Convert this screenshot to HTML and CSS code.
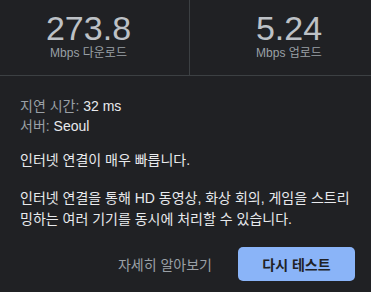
FILE: index.html
```html
<!DOCTYPE html>
<html lang="ko">
<head>
<meta charset="utf-8">
<title>인터넷 속도 테스트</title>
<link rel="stylesheet" href="styles.css">
</head>
<body>
<div class="card">
  <div class="stats">
    <div class="stat stat-down">
      <div class="value">273.8</div>
      <div class="label">Mbps 다운로드</div>
    </div>
    <div class="stat stat-up">
      <div class="value">5.24</div>
      <div class="label">Mbps 업로드</div>
    </div>
  </div>
  <div class="details">
    <div class="row"><span class="key">지연 시간:</span> <span class="val">32 ms</span></div>
    <div class="row"><span class="key">서버:</span> <span class="val">Seoul</span></div>
    <p class="heading">인터넷 연결이 매우 빠릅니다.</p>
    <p class="desc">인터넷 연결을 통해 HD 동영상, 화상 회의, 게임을 스트리밍하는 여러 기기를 동시에 처리할 수 있습니다.</p>
  </div>
  <div class="actions">
    <button class="btn-text" type="button">자세히 알아보기</button>
    <button class="btn-primary" type="button">다시 테스트</button>
  </div>
</div>
</body>
</html>
```
FILE: styles.css
```css
html, body {
  margin: 0;
  padding: 0;
  background: #202124;
}
body {
  font-family: "Liberation Sans", "Noto Sans CJK KR", sans-serif;
  color: #e8eaed;
}
.card {
  width: 371px;
}
.stats {
  display: flex;
  border-bottom: 1px solid #3c4043;
}
.stat {
  text-align: center;
  padding-top: 11px;
  padding-bottom: 15px;
}
.stat-down {
  width: 177px;
  padding-right: 12px;
  border-right: 1px solid #3c4043;
}
.stat-up {
  flex: 1;
  padding-left: 17px;
}
.value {
  font-size: 34px;
  line-height: 34px;
  color: #bdc1c6;
}
.label {
  margin-top: 1px;
  font-size: 12px;
  line-height: 14px;
  color: #9aa0a6;
}
.details {
  padding: 20px 20px 0 20px;
  font-size: 14px;
  line-height: 20px;
}
.key {
  color: #9aa0a6;
}
.val {
  color: #e8eaed;
}
.heading {
  margin: 14px 0 0;
  color: #e8eaed;
}
.desc {
  margin: 18px 0 0;
  line-height: 21px;
  color: #e8eaed;
}
.actions {
  display: flex;
  justify-content: flex-end;
  align-items: center;
  gap: 26px;
  padding: 17px 16px 0 0;
}
.btn-text {
  background: none;
  border: 0;
  padding: 0;
  font-family: inherit;
  font-size: 14px;
  color: #9aa0a6;
}
.btn-primary {
  width: 117px;
  height: 34px;
  border: 0;
  border-radius: 5px;
  background: #8ab4f8;
  color: #202124;
  font-family: inherit;
  font-size: 14px;
  font-weight: bold;
}
```
